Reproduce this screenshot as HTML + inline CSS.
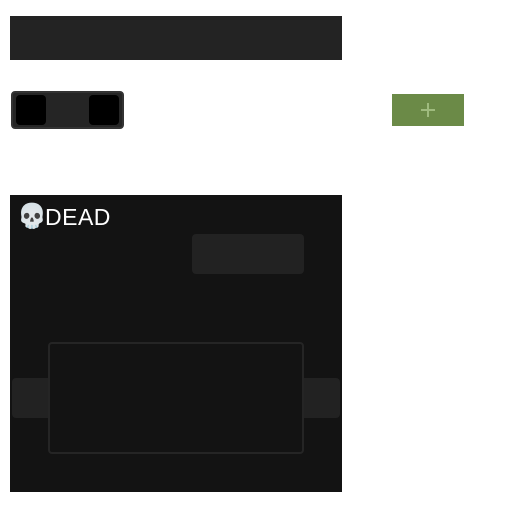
<!DOCTYPE html>
<html><head><style>
body{margin:0;width:512px;height:512px;background:#fff;position:relative;font-family:"Liberation Sans",sans-serif;overflow:hidden}
div{position:absolute;box-sizing:border-box}
</style></head><body>
<div style="left:10px;top:16px;width:332px;height:44px;background:#232323"></div>
<div style="left:11px;top:91px;width:113px;height:38px;background:#252525;border:2px solid #333;border-radius:4px"></div>
<div style="left:16px;top:95px;width:30px;height:30px;background:#000;border-radius:4px"></div>
<div style="left:89px;top:95px;width:30px;height:30px;background:#000;border-radius:4px"></div>
<div style="left:392px;top:94px;width:72px;height:32px;background:#6b8a47"></div>
<div style="left:421px;top:109px;width:14px;height:2px;background:#9fbb7e"></div>
<div style="left:427px;top:103px;width:2px;height:14px;background:#9fbb7e"></div>
<div style="left:10px;top:195px;width:332px;height:297px;background:#131313"></div>
<div style="left:17px;top:202px;font-size:24px;line-height:30px;color:#fff">💀</div>
<div style="left:45px;top:203px;font-size:23px;line-height:28px;color:#fff;letter-spacing:0.5px">DEAD</div>
<div style="left:192px;top:234px;width:112px;height:40px;background:#222;border-radius:4px"></div>
<div style="left:12px;top:378px;width:40px;height:40px;background:#222;border-radius:4px"></div>
<div style="left:300px;top:378px;width:40px;height:40px;background:#222;border-radius:4px"></div>
<div style="left:48px;top:342px;width:256px;height:112px;background:#131313;border:2px solid #252525;border-radius:4px"></div>
</body></html>
